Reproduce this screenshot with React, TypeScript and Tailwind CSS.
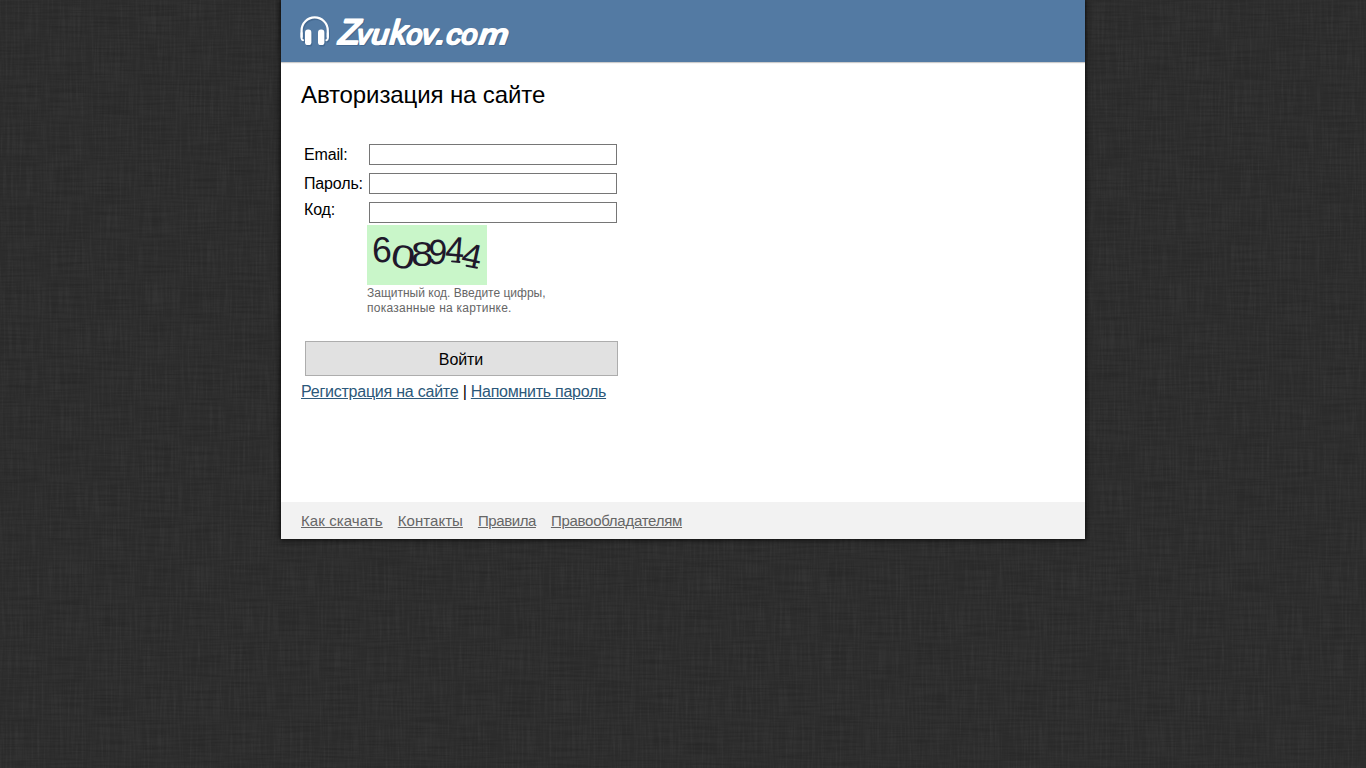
import type { ReactNode } from 'react';

function Fabric() {
  return (
    <svg className="absolute inset-0 -z-10 h-full w-full" aria-hidden="true">
      <defs>
        <filter id="warp" x="0" y="0" width="100%" height="100%" colorInterpolationFilters="sRGB">
          <feTurbulence type="fractalNoise" baseFrequency="0.5 0.025" numOctaves="2" seed="4" />
          <feColorMatrix values="0 0 0 0 .6  0 0 0 0 .6  0 0 0 0 .6  1.2 0 0 0 -.45" />
        </filter>
        <filter id="weft" x="0" y="0" width="100%" height="100%" colorInterpolationFilters="sRGB">
          <feTurbulence type="fractalNoise" baseFrequency="0.022 0.5" numOctaves="2" seed="9" />
          <feColorMatrix values="0 0 0 0 0  0 0 0 0 0  0 0 0 0 0  1.2 0 0 0 -.45" />
        </filter>
      </defs>
      <rect width="100%" height="100%" fill="#2e2e2e" />
      <rect width="100%" height="100%" filter="url(#warp)" opacity=".12" />
      <rect width="100%" height="100%" filter="url(#weft)" opacity=".22" />
    </svg>
  );
}

const letters: [string, number, number, number][] = [
  ['Z', 57, 35.5, 0.99],
  ['v', 75.5, 27.5, 1.0],
  ['u', 90, 27.5, 1.12],
  ['k', 108.5, 34, 0.98],
  ['o', 125, 27.5, 1.02],
  ['v', 140.5, 27.5, 1.05],
  ['.', 154.5, 27.5, 1.3],
  ['c', 165, 27.5, 1.08],
  ['o', 180, 27.5, 1.03],
  ['m', 197.5, 27.5, 1.27],
];

function Wordmark({ fill }: { fill: string }) {
  return (
    <g fill={fill} stroke={fill} strokeLinecap="round" strokeLinejoin="round">
      <path d="M1.6 37 V30.5 A13.1 13.1 0 0 1 27.8 30.5 V37" fill="none" strokeWidth="2.2" />
      <path d="M1.6 33 V38.5 Q1.7 40 3 40.2 M27.8 33 V38.5 Q27.7 40 26.4 40.2" fill="none" strokeWidth="2" />
      <rect x="5" y="29.5" width="6.4" height="15.6" rx="2.9" stroke="none" />
      <rect x="18" y="29.5" width="6.4" height="15.6" rx="2.9" stroke="none" />
      {letters.map(([c, x, size, w], i) => (
        <text key={i} transform={`translate(${x - 19} 43.9) scale(${w} 1) skewX(-5)`} fontSize={size} className="font-['Liberation_Sans'] italic" strokeWidth="2.2">
          {c}
        </text>
      ))}
    </g>
  );
}

const digits: [string, number, number, number, number, number][] = [
  ['6', 5.5, 37.5, -2, 0.98, 36],
  ['0', 22.5, 41, 10, 1.3, 33],
  ['8', 44, 40.5, 0, 1.15, 35],
  ['9', 60.5, 38.5, 3, 0.98, 35],
  ['4', 77.5, 36, 5, 0.95, 36],
  ['4', 93, 39.5, 12, 1.08, 33],
];

function Captcha() {
  return (
    <svg width="120" height="60" viewBox="0 0 120 60" className="-mt-px ml-[-2px] block bg-[#c9f6c9]">
      <g fill="#20182b" strokeLinecap="round" className="font-['Liberation_Sans']">
        {digits.map(([d, x, y, r, w, s], i) => (
          <text key={i} transform={`translate(${x} ${y}) rotate(${r}) scale(${w} 1)`} fontSize={s}>{d}</text>
        ))}
        <path d="M85 36.4 L92.5 37 M99.5 40.8 L110 42.8" stroke="#20182b" strokeWidth="1.9" />
      </g>
    </svg>
  );
}

function Row({ label, children }: { label: string; children?: ReactNode }) {
  return (
    <label className="flex h-[29px] items-center">
      <span className="w-[65px] tracking-[-0.15px]">{label}</span>
      <input type="text" className="h-[21px] w-[248px] border border-[#767676] bg-white px-1 outline-none" />
      {children}
    </label>
  );
}

export default function App() {
  return (
    <div className="relative isolate h-screen overflow-hidden font-['Liberation_Sans',sans-serif] text-base leading-[18px] text-black">
      <Fabric />
      <div className="mx-auto flex h-[539px] w-[804px] flex-col bg-white shadow-[0_0_5px_1px_rgba(0,0,0,0.75)]">
        <header className="h-[62px] shrink-0 bg-[#537aa3] pl-[19px] shadow-[0_1px_1px_rgba(0,0,0,0.2)]">
          <svg width="220" height="62" viewBox="0 0 220 62" aria-label="Zvukov.com">
            <g transform="translate(1 1.5)" opacity=".7"><Wordmark fill="#3f638a" /></g>
            <Wordmark fill="#fff" />
          </svg>
        </header>
        <main className="grow px-5 pt-[19px]">
          <h1 className="text-[24px] leading-7 tracking-[-0.11px]">Авторизация на сайте</h1>
          <form className="ml-[3px] mt-[31px] w-[314px]" onSubmit={(e) => e.preventDefault()}>
            <Row label="Email:" />
            <Row label="Пароль:" />
            <div className="flex pt-1">
              <span className="-mt-px w-[65px] tracking-[-0.15px]">Код:</span>
              <div>
                <input type="text" aria-label="Код" className="block h-[21px] w-[248px] border border-[#767676] bg-white px-1 outline-none" />
                <div className="mt-[3px]"><Captcha /></div>
                <p className="-ml-0.5 pt-px text-[12px] leading-[15px] text-[#666]">Защитный код. Введите цифры,<br /><span className="tracking-[0.26px]">показанные на картинке.</span></p>
              </div>
            </div>
            <button className="ml-px mt-[25px] block h-[35px] w-[313px] border border-[#adadad] bg-[#e1e1e1] pr-px pt-0.5 tracking-[-0.1px]">Войти</button>
          </form>
          <p className="mt-[7px] tracking-[-0.23px]">
            <a href="#" className="text-[#2b587a] underline">Регистрация на сайте</a> | <a href="#" className="tracking-[-0.27px] text-[#2b587a] underline">Напомнить пароль</a>
          </p>
        </main>
        <footer className="flex h-[37px] shrink-0 items-center gap-[15px] bg-[#f2f2f2] px-5 text-[15px] text-[#666]">
          <a href="#" className="tracking-[0.09px] underline">Как скачать</a>
          <a href="#" className="tracking-[0.05px] underline">Контакты</a>
          <a href="#" className="tracking-[-0.42px] underline">Правила</a>
          <a href="#" className="tracking-[-0.27px] underline">Правообладателям</a>
        </footer>
      </div>
    </div>
  );
}
